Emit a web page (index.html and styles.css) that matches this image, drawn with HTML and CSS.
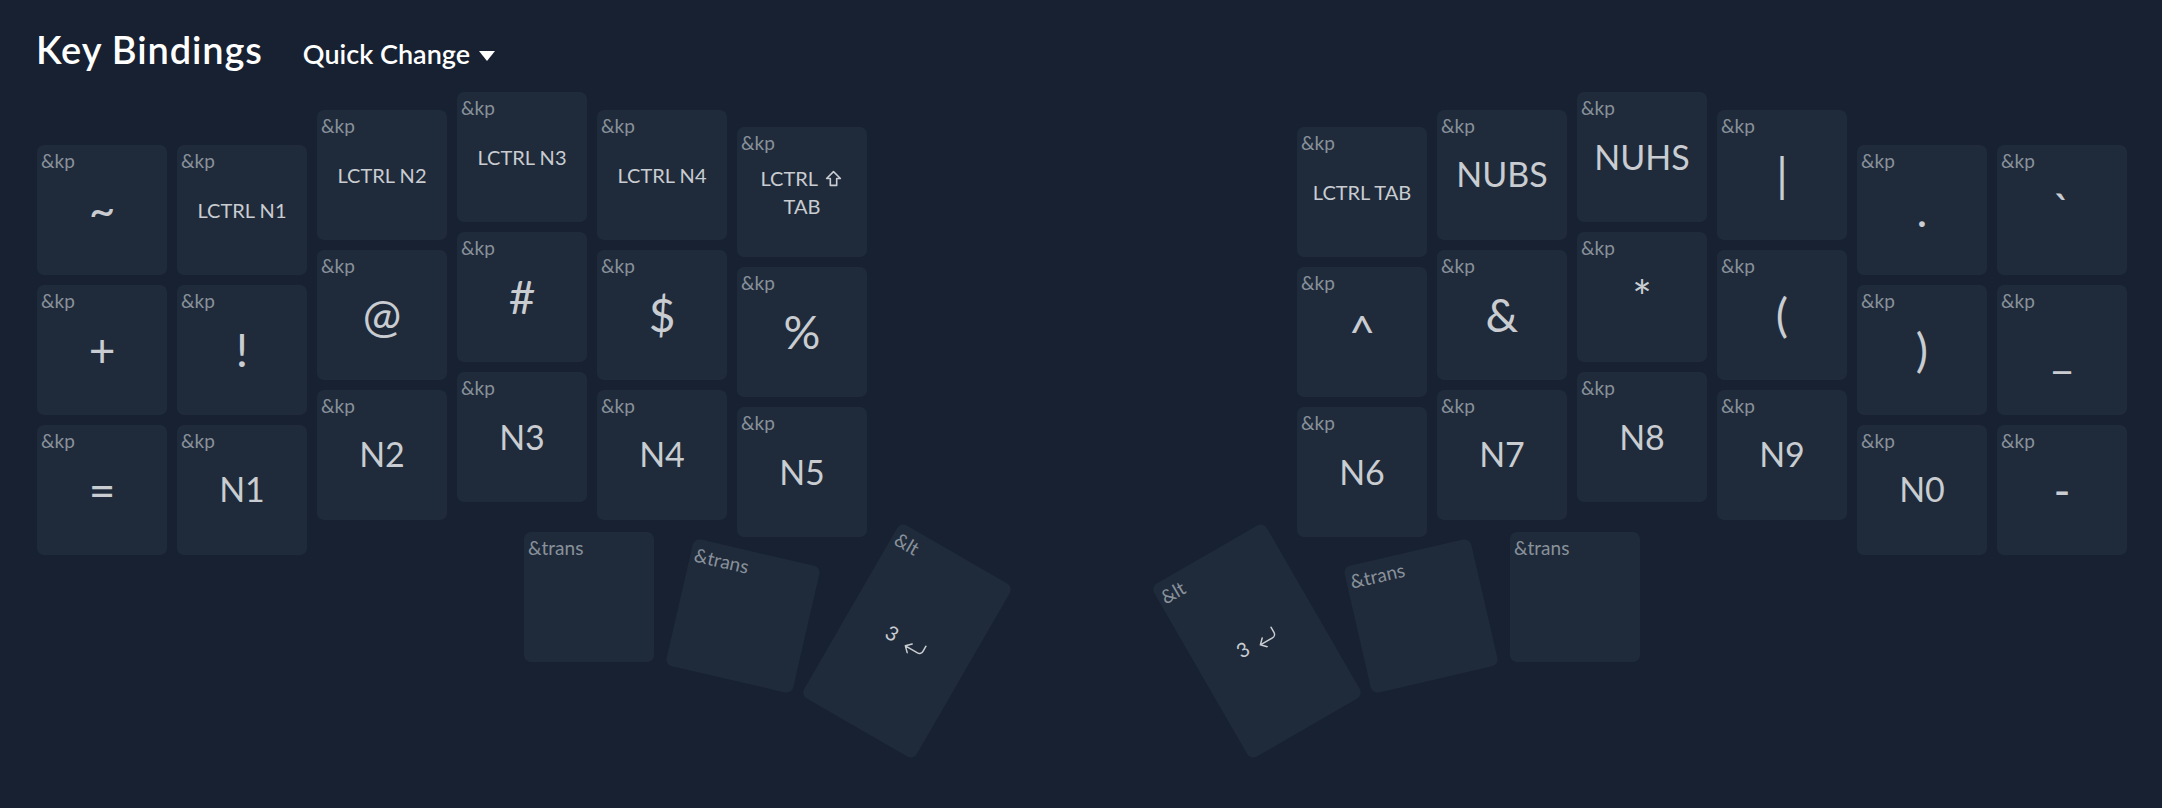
FILE: index.html
```html
<!DOCTYPE html>
<html lang="en">

<head>
    <meta charset="UTF-8">
    <meta name="viewport" content="width=device-width, initial-scale=1.0">
    <title>Key Bindings</title>
    <link rel="stylesheet" href="styles.css">
</head>

<body>

    <header class="keymap_header">
        <h1 class="keymap_title">Key Bindings</h1>
        <button class="quick_change" type="button">
            Quick Change
            <span class="caret"></span>
        </button>
    </header>

    <div class="keymap_board" id="board"></div>

    <script>
        const UNIT = 140;
        const GAP = 10;
        const LEFT = 37;
        const TOP = 6;

        const SHIFT_ICON = '<svg class="icon icon_shift" viewBox="0 0 16 16"><path d="M8 1.5 14.5 8H11v6.5H5V8H1.5z" /></svg>';
        const ENTER_ICON = '<svg class="icon icon_enter" viewBox="0 0 24 17"><path d="M21 1v6a4 4 0 0 1-4 4H3M8 6l-5 5 5 5" /></svg>';

        // y offsets of each column, in units
        const leftCols = [0.375, 0.375, 0.125, 0, 0.125, 0.25];
        const rightCols = [0.25, 0.125, 0, 0.125, 0.375, 0.375];

        const leftRows = [
            ['~', 'LCTRL N1', 'LCTRL N2', 'LCTRL N3', 'LCTRL N4', 'LCTRL {shift} TAB'],
            ['+', '!', '@', '#', '$', '%'],
            ['=', 'N1', 'N2', 'N3', 'N4', 'N5']
        ];
        const rightRows = [
            ['LCTRL TAB', 'NUBS', 'NUHS', '|', '.', '`'],
            ['^', '&', '*', '(', ')', '_'],
            ['N6', 'N7', 'N8', 'N9', 'N0', '-']
        ];

        // thumb keys: centre (px, board coords), size in units, rotation in degrees
        const thumbs = [
            { cx: 589, cy: 511, w: 1, h: 1, r: 0, binding: '&trans', label: '' },
            { cx: 743, cy: 529.5, w: 1, h: 1, r: 13, binding: '&trans', label: '' },
            { cx: 907, cy: 555, w: 1, h: 1.5, r: 30, binding: '&lt', label: '3 {enter}' }
        ];

        function escapeText(text) {
            return text.replace(/&/g, '&amp;').replace(/</g, '&lt;').replace(/>/g, '&gt;');
        }

        function labelSize(label) {
            if (label.includes(' ') || label.length > 4) return 'key_label_small';
            if (label.length === 1) return 'key_label_big';
            return 'key_label_mid';
        }

        function makeKey(binding, label, box) {
            const key = document.createElement('div');
            key.className = 'key';
            key.style.left = box.left + 'px';
            key.style.top = box.top + 'px';
            key.style.width = box.width + 'px';
            key.style.height = box.height + 'px';
            if (box.rotate) key.style.transform = `rotate(${box.rotate}deg)`;

            const html = escapeText(label)
                .replace('{shift}', SHIFT_ICON)
                .replace('{enter}', ENTER_ICON);

            key.innerHTML =
                `<span class="key_binding">${escapeText(binding)}</span>` +
                `<span class="key_label ${labelSize(label)}">${html}</span>`;
            return key;
        }

        function renderHalf(board, rows, cols, startCol) {
            rows.forEach((row, r) => {
                row.forEach((label, c) => {
                    board.appendChild(makeKey('&kp', label, {
                        left: LEFT + (startCol + c) * UNIT,
                        top: TOP + (cols[c] + r) * UNIT,
                        width: UNIT - GAP,
                        height: UNIT - GAP
                    }));
                });
            });
        }

        function renderThumbs(board) {
            const mirror = 2 * LEFT + 15 * UNIT - GAP;
            const right = thumbs.map(t => Object.assign({}, t, { cx: mirror - t.cx, r: -t.r })).reverse();

            thumbs.concat(right).forEach(t => {
                const width = t.w * UNIT - GAP;
                const height = t.h * UNIT - GAP;
                board.appendChild(makeKey(t.binding, t.label, {
                    left: t.cx - width / 2,
                    top: t.cy - height / 2,
                    width: width,
                    height: height,
                    rotate: t.r
                }));
            });
        }

        window.addEventListener('DOMContentLoaded', () => {
            const board = document.getElementById('board');
            renderHalf(board, leftRows, leftCols, 0);
            renderHalf(board, rightRows, rightCols, 9);
            renderThumbs(board);
        });
    </script>

</body>

</html>
```

FILE: styles.css
```css
body {
    margin: 0;
    height: 808px;
    overflow: hidden;
    background: #172131;
    color: #fff;
    font-family: Lato, "Noto Sans", sans-serif;
}

.keymap_header {
    display: flex;
    align-items: baseline;
    gap: 40px;
    height: 86px;
    box-sizing: border-box;
    padding: 27px 0 0 36px;
}

.keymap_title {
    margin: 0;
    font-size: 38px;
    font-weight: 600;
    line-height: 1.2;
    letter-spacing: 0.9px;
}

.quick_change {
    display: flex;
    align-items: center;
    gap: 9px;
    padding: 0;
    border: none;
    background: none;
    color: #fff;
    font-family: inherit;
    font-size: 27px;
    font-weight: 600;
    cursor: pointer;
}

.caret {
    width: 0;
    height: 0;
    margin-top: 4px;
    border-left: 8px solid transparent;
    border-right: 8px solid transparent;
    border-top: 10px solid #fff;
}

.keymap_board {
    position: relative;
    height: 722px;
}

/* keys sit on a free canvas: their place comes from the layout data */
.key {
    position: absolute;
    box-sizing: border-box;
    display: flex;
    align-items: center;
    justify-content: center;
    padding: 0 10px;
    border-radius: 7px;
    background: #1f2b3a;
    color: #c9ccd1;
    text-align: center;
}

.key_binding {
    position: absolute;
    top: 5px;
    left: 4px;
    font-size: 19px;
    line-height: 1.2;
    color: #89919b;
}

.key_label {
    line-height: 1.2;
}

.key_label_small {
    font-size: 20px;
    line-height: 1.4;
}

.key_label_mid {
    font-size: 34px;
}

.key_label_big {
    font-size: 46px;
}

.icon {
    fill: none;
    stroke: currentColor;
    stroke-width: 1.5;
    stroke-linejoin: round;
    stroke-linecap: round;
    vertical-align: -1px;
}

.icon_shift {
    width: 17px;
    height: 17px;
    margin: 0 2px;
}

.icon_enter {
    width: 24px;
    height: 17px;
    margin-left: 4px;
    vertical-align: -3px;
}
```
